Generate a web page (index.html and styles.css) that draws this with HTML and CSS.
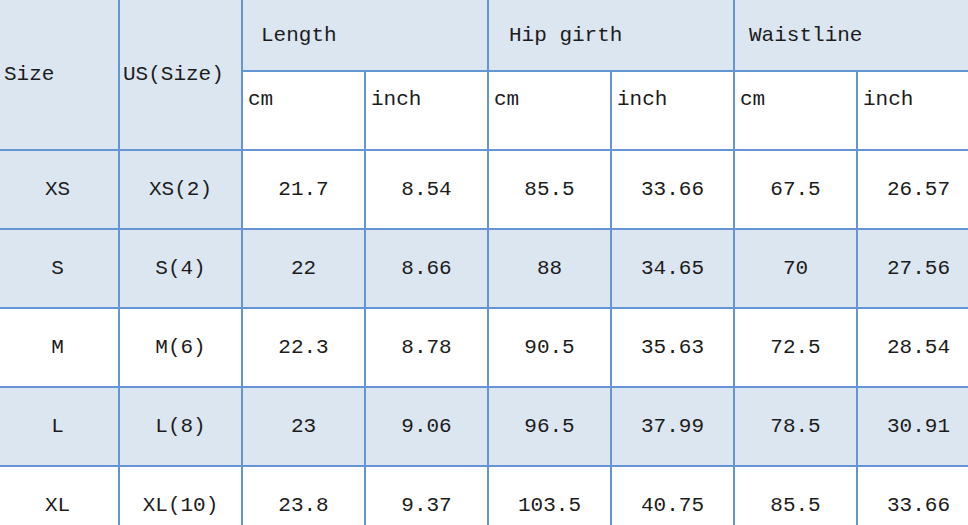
FILE: index.html
```html
<!DOCTYPE html>
<html>
<head>
<meta charset="utf-8">
<link rel="stylesheet" href="styles.css">
</head>
<body>
<table class="size-table">
  <colgroup>
    <col class="c"><col class="c"><col class="c"><col class="c"><col class="c"><col class="c"><col class="c"><col class="c">
  </colgroup>
  <tr class="head1">
    <td rowspan="2" class="shade left-label">Size</td>
    <td rowspan="2" class="shade left-label us">US(Size)</td>
    <td colspan="2" class="shade group g-length">Length</td>
    <td colspan="2" class="shade group g-hip">Hip girth</td>
    <td colspan="2" class="shade group g-waist">Waistline</td>
  </tr>
  <tr class="head2">
    <td class="unit">cm</td><td class="unit">inch</td>
    <td class="unit">cm</td><td class="unit">inch</td>
    <td class="unit">cm</td><td class="unit">inch</td>
  </tr>
  <tr class="body-row">
    <td class="shade">XS</td><td class="shade">XS(2)</td>
    <td>21.7</td><td>8.54</td><td>85.5</td><td>33.66</td><td>67.5</td><td>26.57</td>
  </tr>
  <tr class="body-row shade-row">
    <td>S</td><td>S(4)</td>
    <td>22</td><td>8.66</td><td>88</td><td>34.65</td><td>70</td><td>27.56</td>
  </tr>
  <tr class="body-row">
    <td>M</td><td>M(6)</td>
    <td>22.3</td><td>8.78</td><td>90.5</td><td>35.63</td><td>72.5</td><td>28.54</td>
  </tr>
  <tr class="body-row shade-row">
    <td>L</td><td>L(8)</td>
    <td>23</td><td>9.06</td><td>96.5</td><td>37.99</td><td>78.5</td><td>30.91</td>
  </tr>
  <tr class="body-row">
    <td>XL</td><td>XL(10)</td>
    <td>23.8</td><td>9.37</td><td>103.5</td><td>40.75</td><td>85.5</td><td>33.66</td>
  </tr>
</table>
</body>
</html>
```

FILE: styles.css
```css
html, body {
  margin: 0;
  padding: 0;
  overflow: hidden;
  background: #ffffff;
}

.size-table {
  border-collapse: collapse;
  table-layout: fixed;
  width: 984px;
  margin-left: -5px;
  margin-top: -2px;
  font-family: "Liberation Mono", "DejaVu Sans Mono", monospace;
  font-size: 21px;
  color: #1c1c1c;
}

.size-table .c {
  width: 123px;
}

.size-table td {
  border: 2px solid #6595d4;
  padding: 0;
  text-align: center;
  vertical-align: middle;
  white-space: nowrap;
  overflow: hidden;
}

.shade,
.shade-row td {
  background: #dce6f1;
}

.head1 td {
  height: 70px;
}

.left-label {
  text-align: left !important;
  padding-left: 7px !important;
}

.left-label.us {
  padding-left: 3px !important;
}

.group {
  text-align: left !important;
}

.g-length { padding-left: 18px !important; }
.g-hip { padding-left: 20px !important; }
.g-waist { padding-left: 14px !important; }

.head2 td {
  height: 61px;
}

.unit {
  text-align: left !important;
  vertical-align: top !important;
  padding: 16px 0 0 5px !important;
  background: #ffffff;
}

.body-row td {
  height: 77px;
}
```
